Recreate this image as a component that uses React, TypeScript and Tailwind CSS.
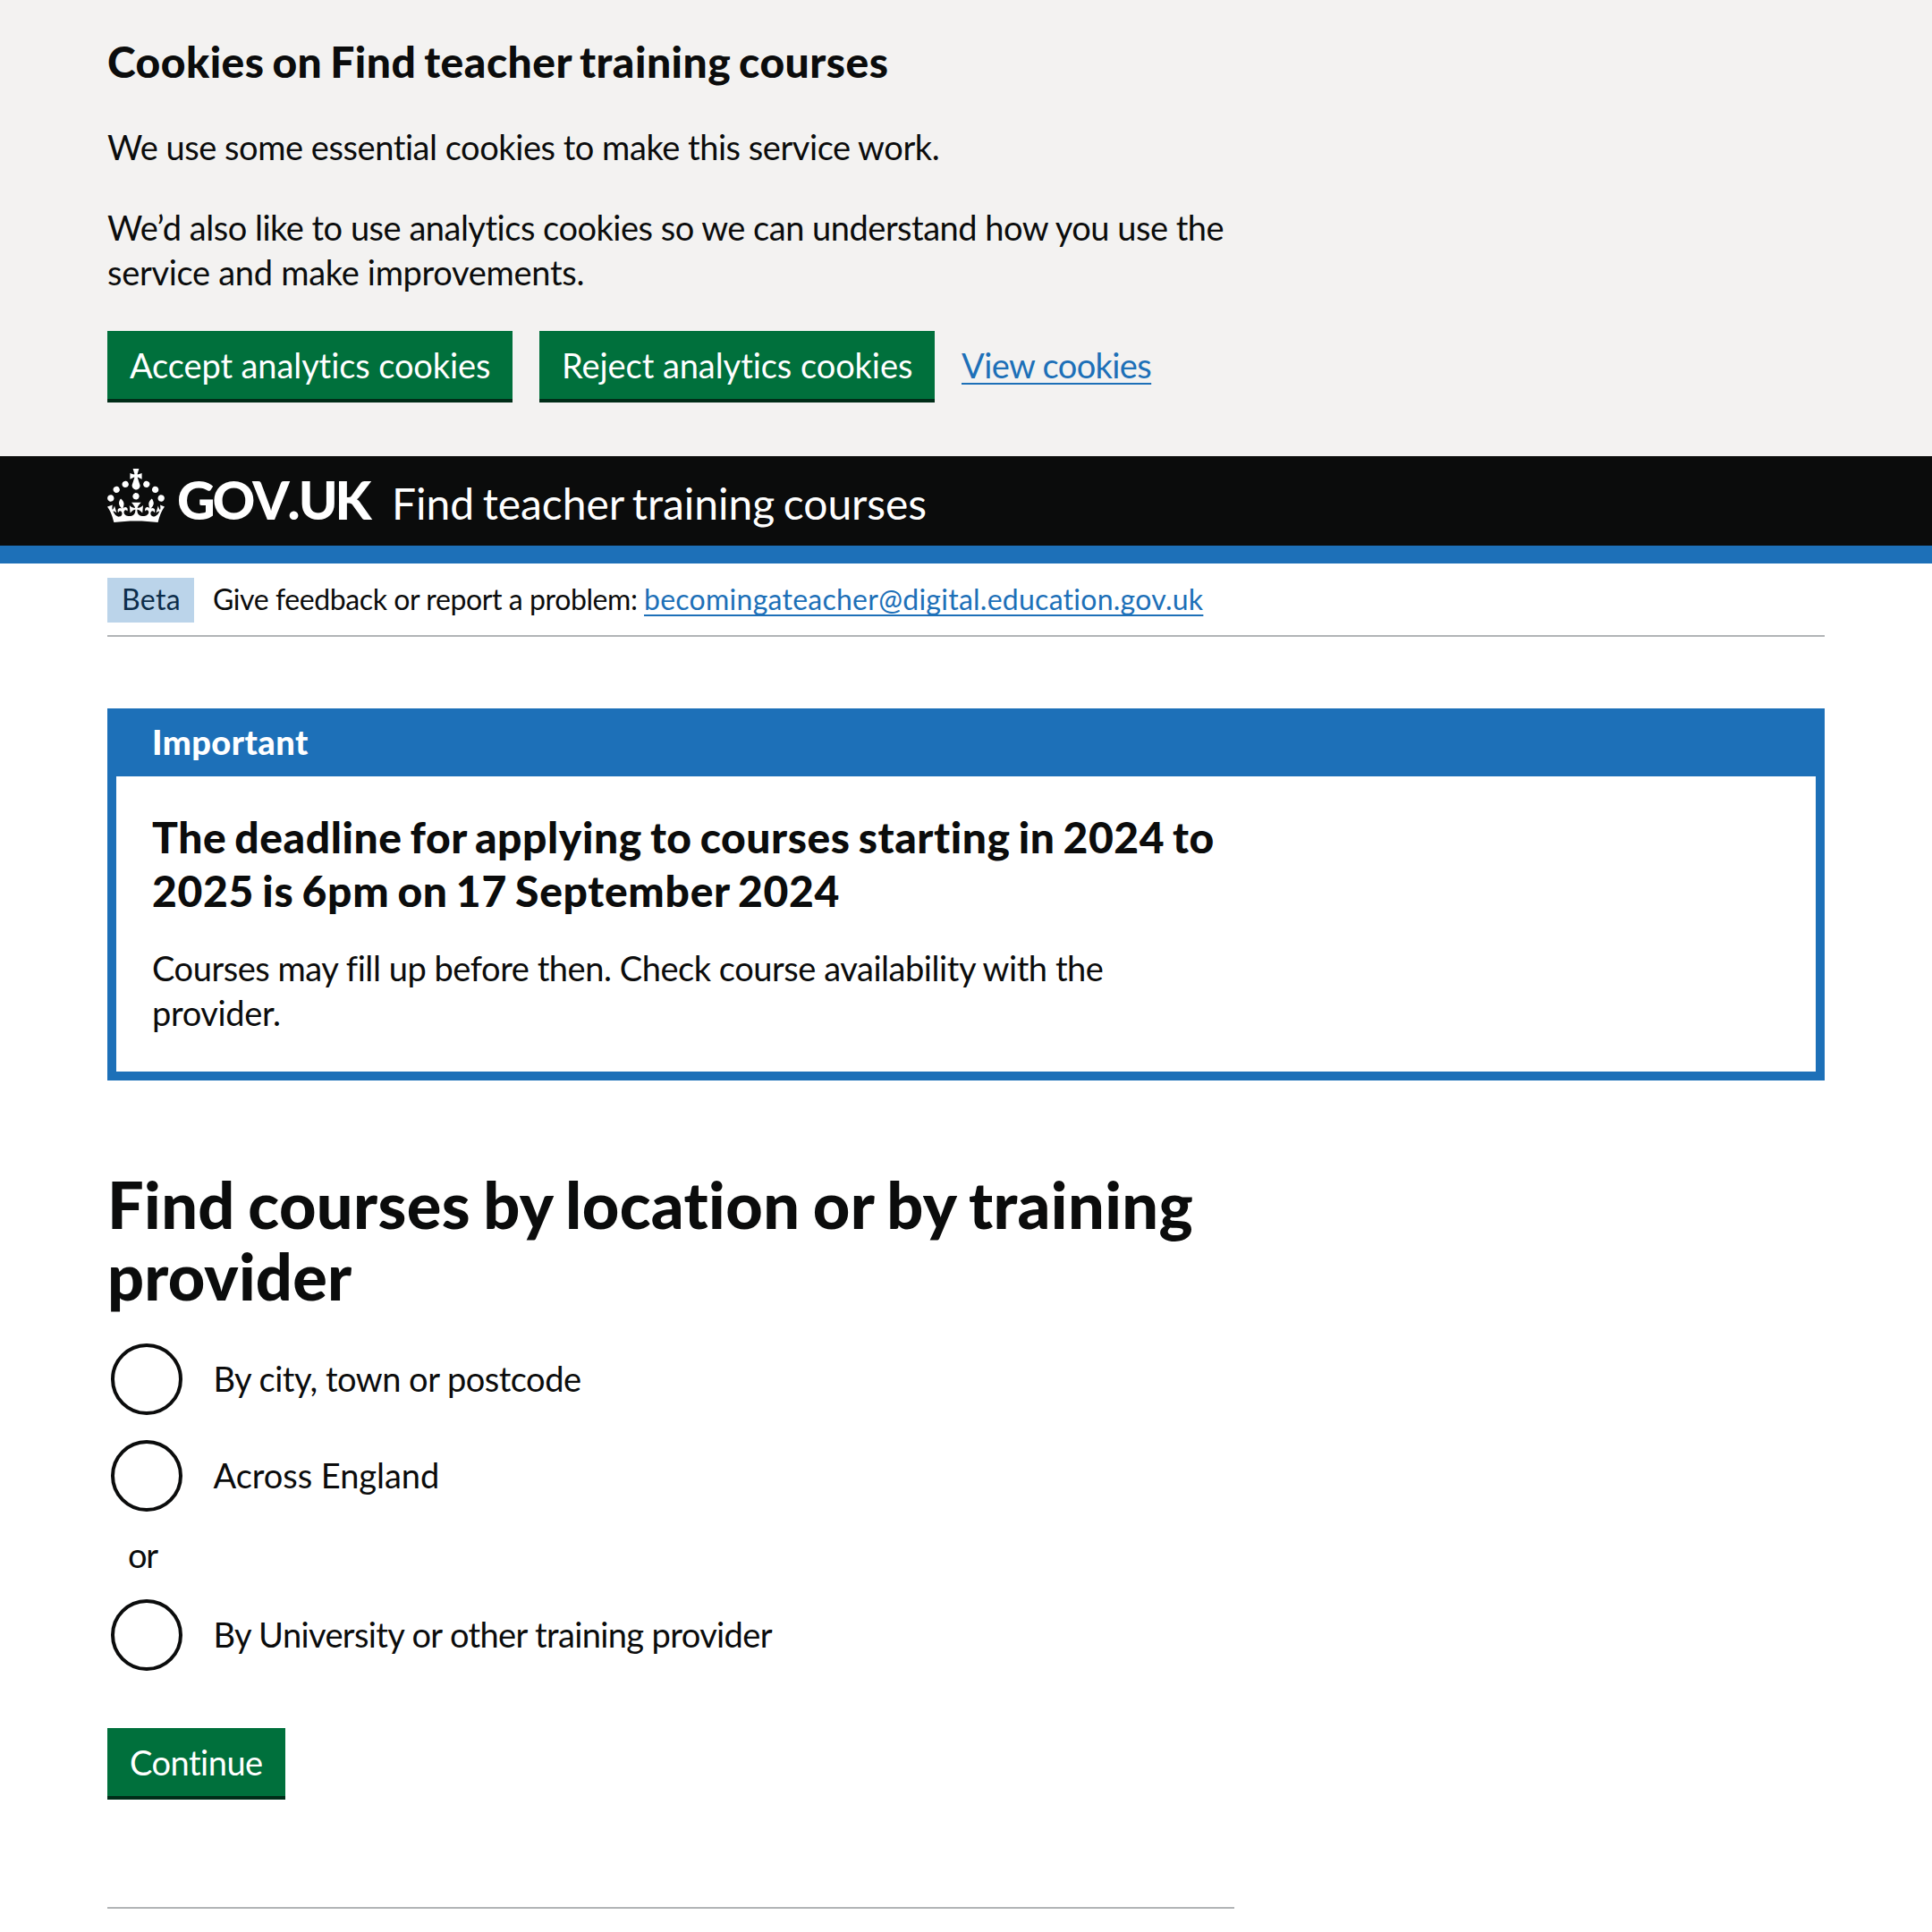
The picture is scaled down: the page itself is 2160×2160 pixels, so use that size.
const Crown = () => (
  <svg viewBox="0 0 32 30" className="mt-3.5 h-[60px] w-16 shrink-0" fill="currentColor" aria-hidden="true">
    <path d="M22.6 10.4c-1 .4-2-.1-2.4-1-.4-.9.1-2 1-2.4.9-.4 2 .1 2.4 1s-.1 2-1 2.4m-5.9 6.7c-.9.4-2-.1-2.4-1-.4-.9.1-2 1-2.4.9-.4 2 .1 2.4 1s-.1 2-1 2.4m10.8-3.7c-1 .4-2-.1-2.4-1-.4-.9.1-2 1-2.4.9-.4 2 .1 2.4 1s0 2-1 2.4m3.3 4.8c-1 .4-2-.1-2.4-1-.4-.9.1-2 1-2.4.9-.4 2 .1 2.4 1s-.1 2-1 2.4M17 4.7l2.3 1.2V2.5l-2.3.7-.2-.2.9-3h-3.4l.9 3-.2.2c-.1.1-2.3-.7-2.3-.7v3.4L15 4.7c.1.1.1.2.2.2l-1.3 4c-.1.2-.1.4-.1.6 0 1.1.8 2 1.9 2.2h.7c1-.2 1.9-1.1 1.9-2.1 0-.2 0-.4-.1-.6l-1.3-4c-.1-.2 0-.2.1-.3m-7.6 5.7c.9.4 2-.1 2.4-1 .4-.9-.1-2-1-2.4-.9-.4-2 .1-2.4 1s0 2 1 2.4m-5 3c.9.4 2-.1 2.4-1 .4-.9-.1-2-1-2.4-.9-.4-2 .1-2.4 1s.1 2 1 2.4m-3.2 4.8c.9.4 2-.1 2.4-1 .4-.9-.1-2-1-2.4-.9-.4-2 .1-2.4 1s0 2 1 2.4m14.8 11c4.4 0 8.6.3 12.3.8 1.1-4.5 2.4-7 3.7-8.8l-2.5-.9c.2 1.3.3 1.9 0 2.7-.4-.4-.8-1.1-1.1-2.3l-1.2 4c.7-.5 1.3-.8 2-.9-1.1 2.5-2.6 3.1-3.5 3-1.1-.2-1.7-1.2-1.5-2.1.3-1.2 1.5-1.5 2.1-.1 1.1-2.3-.8-3-2-2.3 1.9-1.9 2.1-3.5.6-5.6-2.1 1.6-2.1 3.2-1.2 5.5-1.2-1.4-3.2-.6-2.5 1.6.9-1.4 2.1-.5 1.9.8-.2 1.1-1.7 2.1-3.5 1.9-2.7-.2-2.9-2.1-2.9-3.6.7-.1 1.9.5 2.9 1.9l.4-4.3c-1.1 1.1-2.1 1.4-3.2 1.4.4-1.2 2.1-3 2.1-3h-5.4s1.7 1.9 2.1 3c-1.1 0-2.1-.2-3.2-1.4l.4 4.3c1-1.4 2.2-2 2.9-1.9-.1 1.5-.2 3.4-2.9 3.6-1.9.2-3.4-.8-3.5-1.9-.2-1.3 1-2.2 1.9-.8.7-2.3-1.2-3-2.5-1.6.9-2.2.9-3.9-1.2-5.5-1.5 2-1.3 3.7.6 5.6-1.2-.7-3.1 0-2 2.3.6-1.4 1.8-1.1 2.1.1.2.9-.3 1.9-1.5 2.1-.9.2-2.4-.5-3.5-3 .6 0 1.2.3 2 .9l-1.2-4c-.3 1.1-.7 1.9-1.1 2.3-.3-.8-.2-1.4 0-2.7l-2.9.9C1.3 23 2.6 25.5 3.7 30c3.7-.5 7.9-.8 12.3-.8" />
  </svg>
);

const button =
  "block h-20 border-b-4 border-[#002d18] bg-[#00703c] pl-[25px] text-left text-[38px] leading-[38px] whitespace-nowrap text-white";

const link =
  "whitespace-nowrap text-[#1d70b8] underline decoration-2 underline-offset-[5px] [text-decoration-skip-ink:none]";

function Radio({ children, spacing }: { children: string; spacing: string }) {
  return (
    <label className="flex h-20 pl-1">
      <input type="radio" name="find_courses" className="size-20 shrink-0 appearance-none rounded-full border-4 border-[#0b0c0c]" />
      <span className={`pt-[14px] pl-[34.5px] leading-[50px] whitespace-nowrap ${spacing}`}>{children}</span>
    </label>
  );
}

export default function App() {
  return (
    <div className="h-[2160px] overflow-hidden bg-white font-['Lato',sans-serif] text-[38px] leading-[50px] text-[#0b0c0c]">
      <section className="h-[510px] bg-[#f3f2f1] px-[120px] pt-[39px]">
        <h2 className="text-[48px] leading-[60px] font-black tracking-[0.48px] [word-spacing:-3px]">
          Cookies on Find teacher training courses
        </h2>
        <p className="mt-10 tracking-[-0.42px] [word-spacing:-0.2px]">We use some essential cookies to make this service work.</p>
        <p className="mt-10 whitespace-nowrap">
          <span className="block tracking-[-0.49px]">We’d also like to use analytics cookies so we can understand how you use the</span>
          <span className="block tracking-[-0.3px]">service and make improvements.</span>
        </p>
        <div className="mt-[41px] flex">
          <button className={`${button} w-[453px] tracking-[-0.1px]`}>Accept analytics cookies</button>
          <button className={`${button} ml-[30px] w-[442px] tracking-[-0.06px]`}>Reject analytics cookies</button>
          <a className={`${link} ml-[30px] pt-[19px] leading-[38px] tracking-[-0.6px]`}>View cookies</a>
        </div>
      </section>

      <header className="flex h-[120px] border-b-20 border-[#1d70b8] bg-[#0b0c0c] px-[120px] whitespace-nowrap text-white">
        <Crown />
        <span className="w-[254px] pt-[19px] pl-3.5 text-[59px] leading-[60px] font-black tracking-[-3.2px] [font-kerning:none]">
          GO<span className="tracking-[-2px]">V.</span>UK
        </span>
        <span className="pt-[23px] text-[48px] leading-[60px] tracking-[-0.06px] [word-spacing:-2.5px]">
          Find teacher training courses
        </span>
      </header>

      <div className="mx-[120px] flex h-[82px] border-b-2 border-[#b1b4b6] pt-4 text-[32px] leading-10">
        <strong className="h-[50px] w-[97px] bg-[#bbd4ea] pt-1 pl-4 font-normal tracking-[0.37px] text-[#0c2d4a]">Beta</strong>
        <span className="w-[503px] pt-1 pl-[21px] tracking-[-0.41px] whitespace-nowrap">Give feedback or report a problem:</span>
        <a className={`${link} pt-1 tracking-[0.26px] underline-offset-4`}>becomingateacher@digital.education.gov.uk</a>
      </div>

      <section className="mx-[120px] mt-20 h-[416px] border-10 border-t-0 border-[#1d70b8] whitespace-nowrap">
        <h2 className="h-[76px] bg-[#1d70b8] pt-3 pl-10 font-black tracking-[0.45px] text-white">Important</h2>
        <div className="pt-[38px] pl-10">
          <h3 className="text-[48px] leading-[60px] font-black [word-spacing:-3px]">
            <span className="block tracking-[0.58px]">The deadline for applying to courses starting in 2024 to</span>
            <span className="block tracking-[0.7px]">2025 is 6pm on 17 September 2024</span>
          </h3>
          <p className="mt-[31px]">
            <span className="block tracking-[-0.45px]">Courses may fill up before then. Check course availability with the</span>
            <span className="block tracking-[-0.35px]">provider.</span>
          </p>
        </div>
      </section>

      <main className="mx-[120px] mt-[98px] w-[1260px]">
        <h1 className="text-[72px] leading-20 font-black whitespace-nowrap">
          <span className="block tracking-[0.37px] [word-spacing:-3px]">Find courses by location or by training</span>
          <span className="block tracking-[0.19px]">provider</span>
        </h1>
        <div className="mt-9">
          <Radio spacing="tracking-[-0.49px]">By city, town or postcode</Radio>
          <div className="h-7" />
          <Radio spacing="tracking-[-0.04px]">Across England</Radio>
          <p className="mt-[23px] mb-[25px] pl-[23px] tracking-[-1.2px]">or</p>
          <Radio spacing="tracking-[-0.62px]">By University or other training provider</Radio>
        </div>
        <button className={`${button} mt-16 w-[199px] tracking-[-0.5px]`}>Continue</button>
        <hr className="mt-[120px] border-t-2 border-[#b1b4b6]" />
      </main>
    </div>
  );
}
